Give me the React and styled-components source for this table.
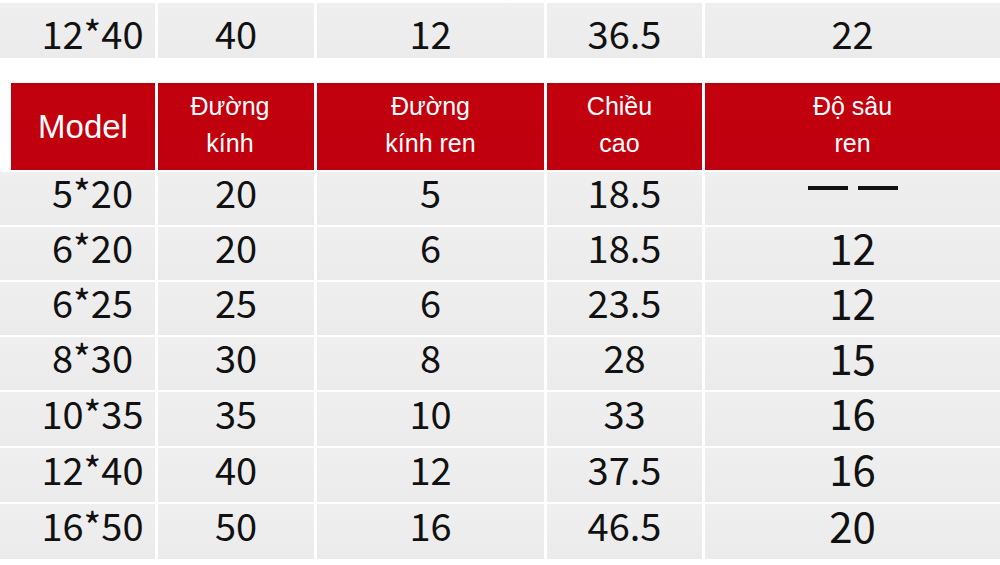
import React from 'react';
import styled, { createGlobalStyle } from 'styled-components';

const GlobalStyle = createGlobalStyle`
  html, body {
    margin: 0;
    padding: 0;
    background: #ffffff;
  }
  body {
    font-family: 'Noto Sans CJK SC', 'Noto Sans', sans-serif;
    color: #111;
  }
`;

const Page = styled.div`
  width: 1000px;
  height: 565px;
  overflow: hidden;
  padding-top: 3px;
  box-sizing: border-box;
`;

const Row = styled.div`
  display: grid;
  grid-template-columns: ${p => (p.$header ? '144px' : '155px')} 156px 227px 155px 1fr;
  column-gap: 3px;
  height: ${p => p.$height || 53}px;
  margin-left: ${p => (p.$header ? 11 : 0)}px;
  margin-bottom: ${p => (p.$gapAfter !== undefined ? p.$gapAfter : 2)}px;
`;

const Cell = styled.div`
  background: linear-gradient(180deg, #efefef 0%, #ebebeb 100%);
  display: flex;
  align-items: center;
  justify-content: center;
  padding-left: ${p => p.$indent || 0}px;
  padding-top: ${p => (p.$lift < 0 ? -p.$lift : 0)}px;
  padding-bottom: ${p => (p.$lift > 0 ? p.$lift : 0)}px;
  font-family: 'Noto Sans CJK SC', 'Noto Sans', sans-serif;
  font-size: ${p => (p.$big ? 42 : 38)}px;
  line-height: ${p => (p.$big ? '34px' : '36px')};
  color: #111;
  box-sizing: border-box;
`;

const HeadCell = styled.div`
  background: linear-gradient(180deg, #b5000b 0%, #c2000e 6%, #c0000e 100%);
  display: flex;
  flex-direction: column;
  align-items: center;
  justify-content: center;
  padding-right: ${p => p.$shift || 0}px;
  font-family: 'Liberation Sans', Arial, sans-serif;
  font-size: ${p => (p.$large ? 33 : 25)}px;
  line-height: 37px;
  color: #ffffff;
  padding-bottom: ${p => (p.$large ? 0 : 4)}px;
  box-sizing: border-box;
`;

const Dash = styled.span`
  display: inline-flex;
  gap: 10px;
  padding-bottom: 8px;

  &::before,
  &::after {
    content: '';
    width: 40px;
    height: 4px;
    background: #111;
  }
`;

const rows = [
  { h: 53, cells: ['5*20', '20', '5', '18.5', null] },
  { h: 53, cells: ['6*20', '20', '6', '18.5', '12'] },
  { h: 53, cells: ['6*25', '25', '6', '23.5', '12'] },
  { h: 53, cells: ['8*30', '30', '8', '28', '15'] },
  { h: 54, cells: ['10*35', '35', '10', '33', '16'] },
  { h: 54, cells: ['12*40', '40', '12', '37.5', '16'] },
  { h: 55, cells: ['16*50', '50', '16', '46.5', '20'] },
];

const App = () => {
  return (
    <Page>
      <GlobalStyle />
      <Row $height={55} $gapAfter={25}>
        <Cell $indent={30} $lift={-4}>12*40</Cell>
        <Cell $lift={-4}>40</Cell>
        <Cell $lift={-4}>12</Cell>
        <Cell $lift={-4}>36.5</Cell>
        <Cell $lift={-4}>22</Cell>
      </Row>

      <Row $header $height={87}>
        <HeadCell $large>Model</HeadCell>
        <HeadCell $shift={12}>
          <span>Đường</span>
          <span>kính</span>
        </HeadCell>
        <HeadCell>
          <span>Đường</span>
          <span>kính ren</span>
        </HeadCell>
        <HeadCell $shift={10}>
          <span>Chiều</span>
          <span>cao</span>
        </HeadCell>
        <HeadCell>
          <span>Độ sâu</span>
          <span>ren</span>
        </HeadCell>
      </Row>

      {rows.map(r => (
        <Row key={r.cells[0]} $height={r.h}>
          <Cell $indent={30} $lift={13}>{r.cells[0]}</Cell>
          <Cell $lift={13}>{r.cells[1]}</Cell>
          <Cell $lift={13}>{r.cells[2]}</Cell>
          <Cell $lift={13}>{r.cells[3]}</Cell>
          <Cell $big $lift={14}>{r.cells[4] === null ? <Dash /> : r.cells[4]}</Cell>
        </Row>
      ))}
    </Page>
  );
};

export default App;
